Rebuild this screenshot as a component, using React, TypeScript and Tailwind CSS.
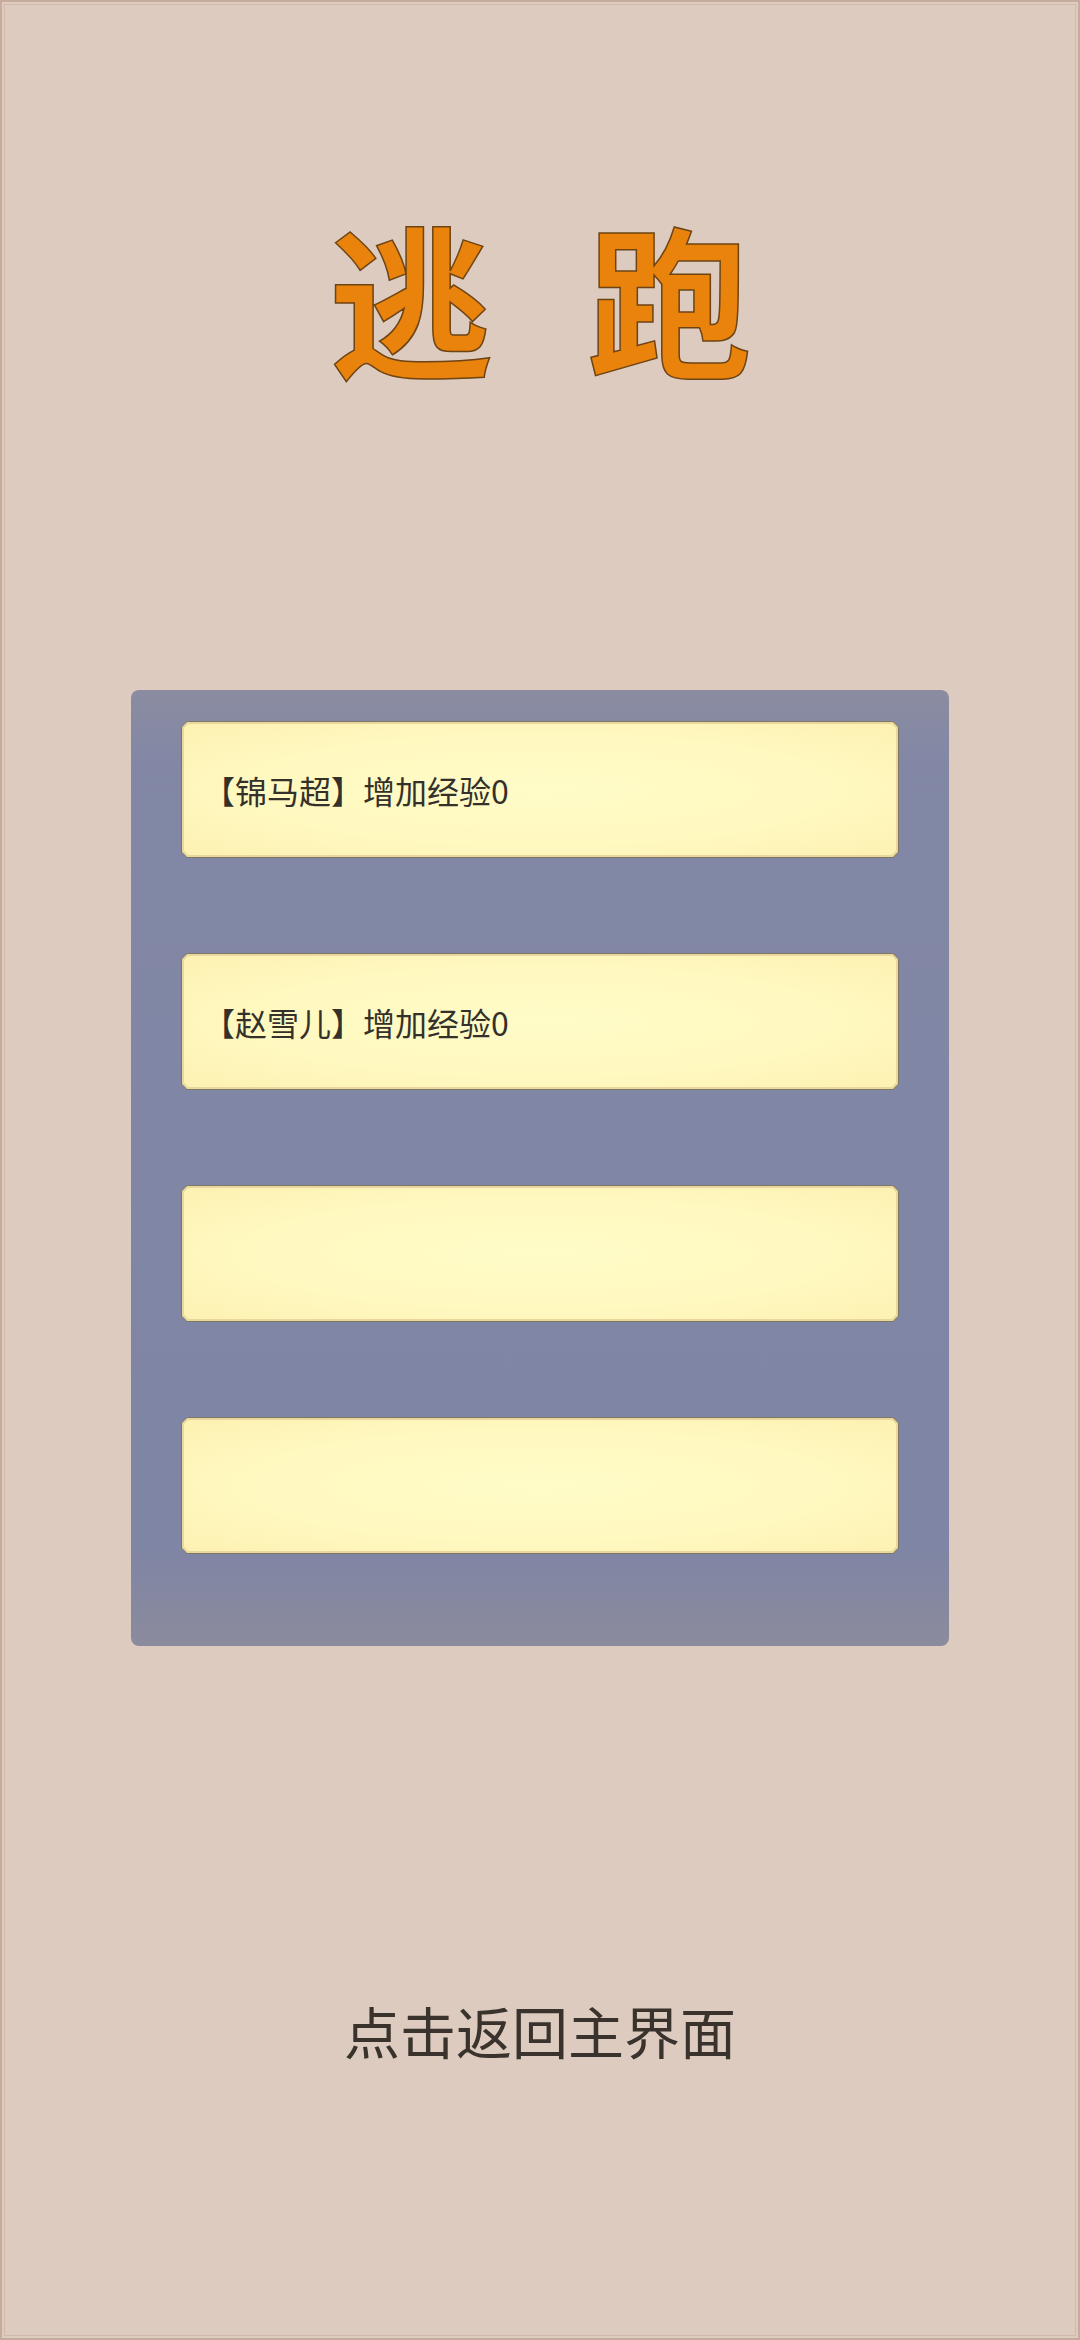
import React from "react";

const Card = ({ text }: { text?: string }) => (
  <div className="h-[137px] bg-[#7d7764] p-px [clip-path:polygon(6px_0,calc(100%_-_6px)_0,100%_6px,100%_calc(100%_-_6px),calc(100%_-_6px)_100%,6px_100%,0_calc(100%_-_6px),0_6px)]">
    <div className="h-full bg-[#e9d79e] p-[2px] [clip-path:polygon(5px_0,calc(100%_-_5px)_0,100%_5px,100%_calc(100%_-_5px),calc(100%_-_5px)_100%,5px_100%,0_calc(100%_-_5px),0_5px)]">
      <div className="flex h-full items-center bg-[radial-gradient(ellipse_at_center,#fffcc8_0%,#fff8bf_60%,#fdf1b2_100%)] pl-[19px] text-[32px] leading-none text-[#34302a] [clip-path:polygon(4px_0,calc(100%_-_4px)_0,100%_4px,100%_calc(100%_-_4px),calc(100%_-_4px)_100%,4px_100%,0_calc(100%_-_4px),0_4px)]">
        {text}
      </div>
    </div>
  </div>
);

export default function App() {
  return (
    <div
      className="min-h-[2340px] w-[1080px] bg-[#dccbbe] border-2 border-[#c7ab9c]"
      style={{ fontFamily: '"Noto Sans CJK SC", "Noto Sans", sans-serif' }}
    >
      <div className="m-[2px] flex min-h-[2332px] flex-col items-center border border-[#d2b9ab]">
        <div className="mt-[208px] flex h-[164px] gap-[95px] text-[164px] font-bold leading-none text-[#e9830b] [-webkit-text-stroke:1.5px_#6e4414]">
          <span>逃</span>
          <span>跑</span>
        </div>

        <div className="mt-[313px] flex h-[956px] w-[818px] flex-col gap-[95px] rounded-[8px] bg-[linear-gradient(180deg,#8b8ca1_0%,#8187a5_8%,#7f85a4_90%,#8b8b9d_100%)] px-[50px] pt-[31px]">
          <Card text="【锦马超】增加经验0" />
          <Card text="【赵雪儿】增加经验0" />
          <Card />
          <Card />
        </div>

        <div className="mt-[356px] text-[56px] leading-none text-[#3a332d]">
          点击返回主界面
        </div>
      </div>
    </div>
  );
}
